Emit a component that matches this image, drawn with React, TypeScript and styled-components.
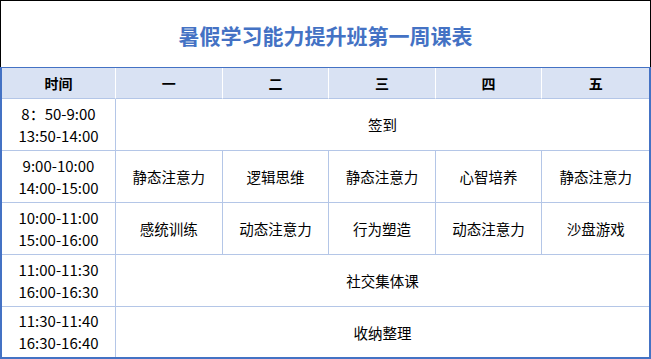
import React from 'react'
import styled, { createGlobalStyle } from 'styled-components'

const GlobalStyle = createGlobalStyle`
  html, body {
    margin: 0;
    padding: 0;
    background: #ffffff;
  }
  body {
    font-family: "Noto Sans CJK SC", "Noto Sans", sans-serif;
    color: #000000;
  }
`

const BLUE = '#4472c4'
const LINE = '#b4c6e7'
const HEAD_BG = '#d9e2f3'

const Sheet = styled.div`
  width: 651px;
  height: 359px;
  box-sizing: border-box;
  display: flex;
  flex-direction: column;
`

const TitleBar = styled.div`
  height: 67px;
  box-sizing: border-box;
  border: 1px solid #000000;
  border-bottom: none;
  display: flex;
  align-items: center;
  justify-content: center;
  padding-top: 2px;
`

const Title = styled.h1`
  margin: 0;
  font-size: 21px;
  font-weight: 700;
  color: ${BLUE};
`

const Grid = styled.div`
  flex: 1;
  box-sizing: border-box;
  border: 2px solid ${BLUE};
  border-top: 1px solid ${BLUE};
  display: grid;
  grid-template-columns: 114px repeat(5, 1fr);
  grid-template-rows: 31px repeat(4, 52px) 1fr;
`

const HeadCell = styled.div<{ $last?: boolean }>`
  background: ${HEAD_BG};
  border-right: ${(p) => (p.$last ? 'none' : '1px solid #ffffff')};
  border-bottom: 1px solid ${LINE};
  display: flex;
  align-items: center;
  justify-content: center;
  font-size: 14px;
  font-weight: 700;
`

const Cell = styled.div<{ $span?: number; $last?: boolean; $bottom?: boolean }>`
  grid-column: span ${(p) => p.$span ?? 1};
  border-right: ${(p) => (p.$last ? 'none' : `1px solid ${LINE}`)};
  border-bottom: ${(p) => (p.$bottom ? 'none' : `1px solid ${LINE}`)};
  display: flex;
  align-items: center;
  justify-content: center;
  font-size: 14.5px;
  text-align: center;
`

const TimeCell = styled(Cell)`
  flex-direction: column;
  font-size: 15px;
  line-height: 22px;
`

const days = ['一', '二', '三', '四', '五']

type Row = { times: [string, string]; items: string[] }

const rows: Row[] = [
  { times: ['8：50-9:00', '13:50-14:00'], items: ['签到'] },
  {
    times: ['9:00-10:00', '14:00-15:00'],
    items: ['静态注意力', '逻辑思维', '静态注意力', '心智培养', '静态注意力'],
  },
  {
    times: ['10:00-11:00', '15:00-16:00'],
    items: ['感统训练', '动态注意力', '行为塑造', '动态注意力', '沙盘游戏'],
  },
  { times: ['11:00-11:30', '16:00-16:30'], items: ['社交集体课'] },
  { times: ['11:30-11:40', '16:30-16:40'], items: ['收纳整理'] },
]

export default function App() {
  return (
    <>
      <GlobalStyle />
      <Sheet>
        <TitleBar>
          <Title>暑假学习能力提升班第一周课表</Title>
        </TitleBar>
        <Grid>
          <HeadCell>时间</HeadCell>
          {days.map((d, i) => (
            <HeadCell key={d} $last={i === days.length - 1}>
              {d}
            </HeadCell>
          ))}
          {rows.map((row, r) => {
            const bottom = r === rows.length - 1
            return (
              <React.Fragment key={row.times[0]}>
                <TimeCell $bottom={bottom}>
                  <span>{row.times[0]}</span>
                  <span>{row.times[1]}</span>
                </TimeCell>
                {row.items.length === 1 ? (
                  <Cell $span={5} $last $bottom={bottom}>
                    {row.items[0]}
                  </Cell>
                ) : (
                  row.items.map((item, i) => (
                    <Cell key={i} $last={i === row.items.length - 1} $bottom={bottom}>
                      {item}
                    </Cell>
                  ))
                )}
              </React.Fragment>
            )
          })}
        </Grid>
      </Sheet>
    </>
  )
}
